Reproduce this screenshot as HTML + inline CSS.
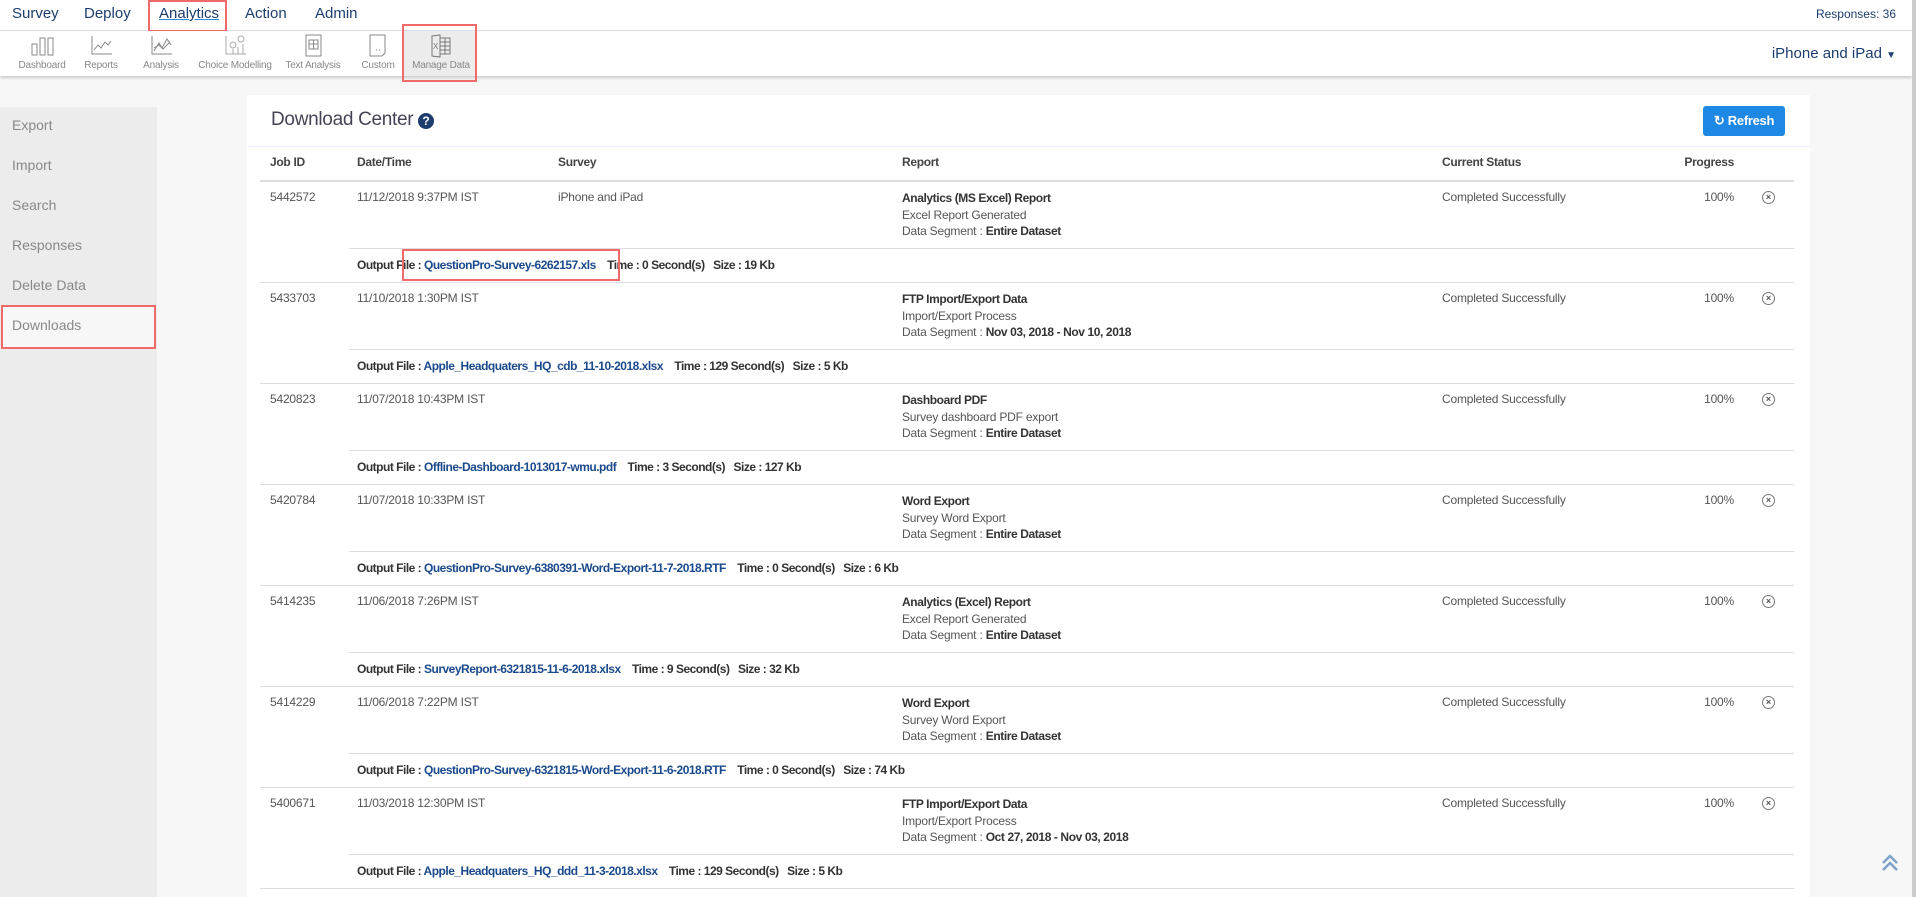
<!DOCTYPE html>
<html><head><meta charset="utf-8"><style>
*{margin:0;padding:0;box-sizing:border-box}
body{width:1916px;height:897px;overflow:hidden;background:#f7f7f7;font-family:"Liberation Sans",sans-serif;position:relative;color:#555}
.a{position:absolute;white-space:nowrap}
.top{position:absolute;left:0;top:0;width:1912px;height:31px;background:#fff;border-bottom:1px solid #dde;}
.nav{font-size:15px;color:#1c3d6e;top:5px}
.sub{position:absolute;left:0;top:31px;width:1912px;height:45px;background:#fff;box-shadow:0 2px 3px rgba(0,0,0,.18)}
.lbl{font-size:10px;color:#888;top:60px;transform:translateX(-50%);letter-spacing:-0.2px}
.ic{position:absolute;top:34px}
.side{position:absolute;left:0;top:107px;width:157px;height:790px;background:#ececec}
.si{font-size:14px;color:#888;left:12px}
.panel{position:absolute;left:247px;top:95px;width:1563px;height:802px;background:#fff}
.th{font-size:12px;font-weight:bold;color:#444;top:155px;letter-spacing:-0.3px}
.td{font-size:12px;color:#555;letter-spacing:-0.2px}
.b{font-weight:bold;color:#333;letter-spacing:-0.4px}
.lk{color:#1b4a8c;font-weight:bold}
.hl{position:absolute;left:260px;width:1534px;height:1px;background:#ddd}
.hl2{position:absolute;left:349px;width:1445px;height:1px;background:#ddd}
.x{width:13px;height:13px;border:1px solid #777;border-radius:50%;font-size:9px;line-height:11px;text-align:center;color:#555;font-weight:bold}
</style></head><body>
<div class="top"></div>
<div class="a nav" style="left:12px">Survey</div>
<div class="a nav" style="left:84px">Deploy</div>
<div class="a nav" style="left:159px;text-decoration:underline;text-decoration-color:#2a8ad8">Analytics</div>
<div class="a nav" style="left:245px">Action</div>
<div class="a nav" style="left:315px">Admin</div>
<div class="a" style="left:148px;top:0;width:79px;height:32px;border:2px solid #f06a6a"></div>
<div class="a" style="right:20px;top:7px;font-size:12px;color:#1c3d6e">Responses: 36</div>
<div class="sub"></div>
<div class="a" style="left:403px;top:31px;width:73px;height:45px;background:#ececec"></div>
<svg class="ic" style="left:30px" width="26" height="22" fill="none" stroke="#888"><rect x="2" y="10" width="5" height="11"/><rect x="10" y="4" width="5" height="17"/><rect x="18" y="4" width="5" height="17"/></svg>
<svg class="ic" style="left:90px" width="24" height="22" fill="none" stroke="#888"><path d="M2 2V20H22M4 16l4-5 3 3 4-6 3 3 3-4"/></svg>
<svg class="ic" style="left:150px" width="24" height="22" fill="none" stroke="#888"><path d="M2 2V20H22M4 17l5-8 3 5 5-9 4 6M4 14l5-3 4 4 7-7"/></svg>
<svg class="ic" style="left:224px" width="24" height="22" fill="none" stroke="#aaa"><path d="M2 2V20H22"/><circle cx="9" cy="11" r="3"/><circle cx="17" cy="5" r="3"/><path d="M9 15v5M14 13v7M19 10v10"/></svg>
<svg class="ic" style="left:304px" width="20" height="24" fill="none" stroke="#888"><rect x="2" y="1" width="15" height="21"/><path d="M5 6h9v9H5zM5 10h9M9.5 6v9"/></svg>
<svg class="ic" style="left:368px" width="20" height="24" fill="none" stroke="#888"><path d="M2 1h15v18l-3 3H2z"/><path d="M8 16h1M11 16h1"/></svg>
<svg class="ic" style="left:430px" width="22" height="24" fill="none" stroke="#777"><path d="M2 2l8-1v22l-8-1z"/><path d="M10 4h10v16H10M10 8h10M10 12h10M10 16h10M15 4v16"/><text x="3" y="15" font-size="8" fill="#777" stroke="none" font-family="Liberation Sans">X</text></svg>
<div class="a lbl" style="left:42px">Dashboard</div>
<div class="a lbl" style="left:101px">Reports</div>
<div class="a lbl" style="left:161px">Analysis</div>
<div class="a lbl" style="left:235px">Choice Modelling</div>
<div class="a lbl" style="left:313px">Text Analysis</div>
<div class="a lbl" style="left:378px">Custom</div>
<div class="a lbl" style="left:441px">Manage Data</div>
<div class="a" style="left:402px;top:24px;width:75px;height:58px;border:2px solid #f06a6a"></div>
<div class="a" style="right:20px;top:45px;font-size:15px;color:#1c3d6e">iPhone and iPad <span style="font-size:10px">▼</span></div>

<div class="side"></div>
<div class="a si" style="top:117px">Export</div>
<div class="a si" style="top:157px">Import</div>
<div class="a si" style="top:197px">Search</div>
<div class="a si" style="top:237px">Responses</div>
<div class="a si" style="top:277px">Delete Data</div>
<div class="a" style="left:1px;top:305px;width:155px;height:44px;background:#f7f7f7;border-left:2px solid #2a8ad8"></div>
<div class="a si" style="top:317px">Downloads</div>
<div class="a" style="left:1px;top:305px;width:155px;height:44px;border:2px solid #f06a6a"></div>

<div class="panel"></div>
<div class="a" style="left:271px;top:109px;font-size:19px;color:#445;letter-spacing:-0.3px">Download Center</div>
<div class="a" style="left:418px;top:113px;width:16px;height:16px;border-radius:50%;background:#1c3d6e;color:#fff;font-size:12px;font-weight:bold;text-align:center;line-height:16px">?</div>
<div class="a" style="left:1703px;top:106px;width:82px;height:30px;background:#1e88e5;border-radius:3px;color:#fff;font-size:13px;line-height:30px;text-align:center;font-weight:bold;letter-spacing:-0.3px">↻ Refresh</div>
<div class="a" style="left:247px;top:146px;width:1563px;height:1px;background:#eef"></div>
<div class="a th" style="left:270px">Job ID</div>
<div class="a th" style="left:357px">Date/Time</div>
<div class="a th" style="left:558px">Survey</div>
<div class="a th" style="left:902px">Report</div>
<div class="a th" style="left:1442px">Current Status</div>
<div class="a th" style="right:182px">Progress</div>
<div class="a" style="left:260px;top:180px;width:1534px;height:2px;background:#ddd"></div>

<div id="rows"></div>
<script>
var d=[["5442572","11/12/2018 9:37PM IST","iPhone and iPad","Analytics (MS Excel) Report","Excel Report Generated","Entire Dataset","QuestionPro-Survey-6262157.xls","0","19 Kb"],
["5433703","11/10/2018 1:30PM IST","","FTP Import/Export Data","Import/Export Process","Nov 03, 2018 - Nov 10, 2018","Apple_Headquaters_HQ_cdb_11-10-2018.xlsx","129","5 Kb"],
["5420823","11/07/2018 10:43PM IST","","Dashboard PDF","Survey dashboard PDF export","Entire Dataset","Offline-Dashboard-1013017-wmu.pdf","3","127 Kb"],
["5420784","11/07/2018 10:33PM IST","","Word Export","Survey Word Export","Entire Dataset","QuestionPro-Survey-6380391-Word-Export-11-7-2018.RTF","0","6 Kb"],
["5414235","11/06/2018 7:26PM IST","","Analytics (Excel) Report","Excel Report Generated","Entire Dataset","SurveyReport-6321815-11-6-2018.xlsx","9","32 Kb"],
["5414229","11/06/2018 7:22PM IST","","Word Export","Survey Word Export","Entire Dataset","QuestionPro-Survey-6321815-Word-Export-11-6-2018.RTF","0","74 Kb"],
["5400671","11/03/2018 12:30PM IST","","FTP Import/Export Data","Import/Export Process","Oct 27, 2018 - Nov 03, 2018","Apple_Headquaters_HQ_ddd_11-3-2018.xlsx","129","5 Kb"]];
var h="";
d.forEach(function(r,i){var T=181+101*i;
h+='<div class="a td" style="left:270px;top:'+(T+9)+'px">'+r[0]+'</div>';
h+='<div class="a td" style="left:357px;top:'+(T+9)+'px">'+r[1]+'</div>';
h+='<div class="a td" style="left:558px;top:'+(T+9)+'px">'+r[2]+'</div>';
h+='<div class="a td" style="left:902px;top:'+(T+9)+'px;line-height:16.5px"><span class="b">'+r[3]+'</span><br>'+r[4]+'<br>Data Segment : <span class="b">'+r[5]+'</span></div>';
h+='<div class="a td" style="left:1442px;top:'+(T+9)+'px">Completed Successfully</div>';
h+='<div class="a td" style="right:182px;top:'+(T+9)+'px">100%</div>';
h+='<div class="a x" style="left:1762px;top:'+(T+10)+'px">×</div>';
h+='<div class="hl2" style="top:'+(T+67)+'px"></div>';
h+='<div class="a td b" style="left:357px;top:'+(T+77)+'px;font-size:12px;letter-spacing:-0.5px">Output File : <span class="lk">'+r[6]+'</span>&nbsp;&nbsp;&nbsp; Time : '+r[7]+' Second(s)&nbsp;&nbsp; Size : '+r[8]+'</div>';
h+='<div class="hl" style="top:'+(T+101)+'px"></div>';});
document.getElementById("rows").innerHTML=h;
</script>
<div class="a" style="left:402px;top:249px;width:218px;height:32px;border:2px solid #f06a6a"></div>
<svg class="a" style="left:1881px;top:854px" width="18" height="18" fill="none" stroke="#7fa3c8" stroke-width="2.5"><path d="M2 9l7-7 7 7M2 16l7-7 7 7"/></svg>
<div class="a" style="left:1912px;top:0;width:4px;height:897px;background:#ccc"></div>
</body></html>
